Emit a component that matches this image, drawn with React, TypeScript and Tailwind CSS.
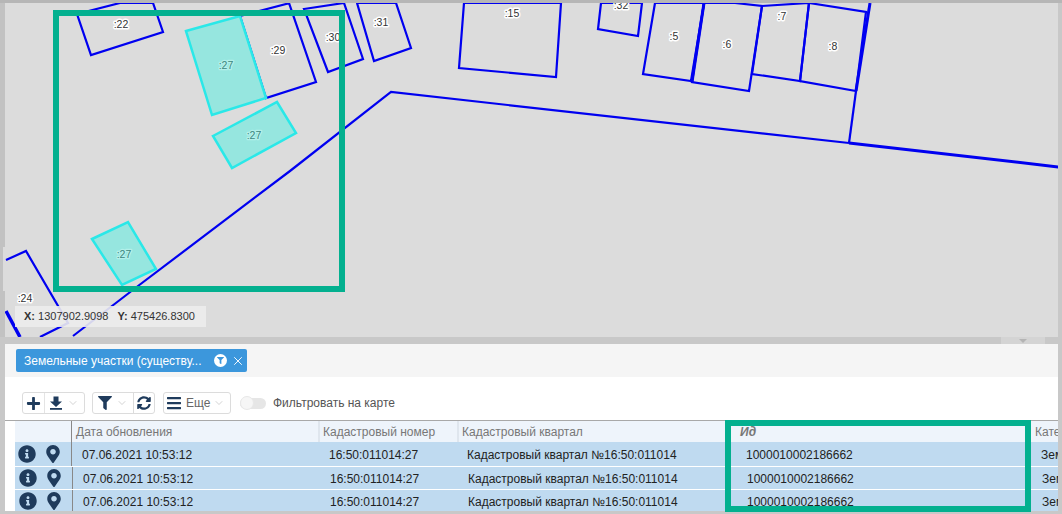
import { FaBars, FaFilter, FaInfoCircle, FaMapMarkerAlt, FaPlus, FaSyncAlt } from "react-icons/fa";
import { ChevronDown, X } from "lucide-react";

const PARCELS = [
  "153,3 163,32 91,55 77,14 120,3",
  "240,16 290,3 289,3 316,82 266,98",
  "304,9 344,3 363,59 328,72",
  "357,3 374,61 411,48 396,3",
  "464,3 459,68 556,77 561,3",
  "601,3 598,29 638,36 642,3",
  "655,3 643,74 691,81 704,3",
  "704,3 692,82 749,91 762,6 735,3",
  "762,6 752,74 800,81 809,3",
  "809,3 866,12 856,91 800,81",
];

const SELECTED = [
  "186,31 240,16 266,98 212,115",
  "213,136 277,102 296,133 232,168",
  "92,239 128,222 156,269 122,285",
];

const LABELS = [
  { t: ":22", x: 121, y: 28 },
  { t: ":29", x: 278, y: 54 },
  { t: ":30", x: 333, y: 41 },
  { t: ":31", x: 381, y: 26 },
  { t: ":15", x: 512, y: 17 },
  { t: ":32", x: 621, y: 9 },
  { t: ":5", x: 674, y: 40 },
  { t: ":6", x: 727, y: 48 },
  { t: ":7", x: 782, y: 20 },
  { t: ":8", x: 833, y: 50 },
  { t: ":24", x: 25, y: 302 },
];

const SELECTED_LABELS = [
  { x: 226, y: 69 },
  { x: 254, y: 139 },
  { x: 124, y: 258 },
];

// the lower two rows sit 1px to the right in the picture
const ROWS = [
  { h: "h-[24px]", shift: "" },
  { h: "h-[22px] mt-px", shift: "ml-px" },
  { h: "h-[21px] mt-px", shift: "ml-px" },
];

function MapCanvas() {
  return (
    <svg className="block h-[334px] w-[1053px] shrink-0" viewBox="5 3 1053 334">
      <rect x="5" y="3" width="1053" height="334" fill="#dcdcdc" />
      <g fill="none" stroke="#0000f0" strokeWidth="2.2" strokeLinejoin="miter">
        {PARCELS.map((p) => (
          <polygon key={p} points={p} />
        ))}
        <polyline points="6,260 26,251 68,323 40,337" />
        <polyline points="73,336 138,286 290,171 391,92 849,143" />
        <polyline points="849,143 1059,167" strokeWidth="3" />
        <polyline points="870,3 856,91" strokeWidth="3" />
        <polyline points="856,91 849,143" />
        <polyline points="704,3 692,82" strokeWidth="3" />
        <polyline points="6,311 20,337" strokeWidth="3.5" />
      </g>
      {SELECTED.map((p) => (
        <polygon key={p} points={p} fill="#96e6df" stroke="#2ae8e8" strokeWidth="2.5" />
      ))}
      {LABELS.map((l) => (
        <text key={l.t} x={l.x} y={l.y} textAnchor="middle" fontSize="10.5" fill="#333" stroke="#fff" strokeWidth="3" paintOrder="stroke" strokeLinejoin="round">
          {l.t}
        </text>
      ))}
      {SELECTED_LABELS.map((l) => (
        <text key={l.x} x={l.x} y={l.y} textAnchor="middle" fontSize="10.5" fill="#3d8780" stroke="#b4f0ea" strokeWidth="2.5" paintOrder="stroke" strokeLinejoin="round">
          :27
        </text>
      ))}
    </svg>
  );
}

function DownloadIcon() {
  return (
    <svg width="14" height="14" viewBox="0 0 14 14" fill="#1f3b5c">
      <path d="M4.5 0.5h5v5H13L7 11 1 5.5h3.5z" />
      <rect x="1" y="12" width="12" height="1.8" />
    </svg>
  );
}

function Caret() {
  return <ChevronDown size={12} strokeWidth={1.2} className="shrink-0 text-[#b5b5b5]" />;
}

export default function App() {
  return (
    <div className="relative flex h-[514px] w-[1062px] flex-col overflow-hidden bg-[#c8c8c8] font-['Liberation_Sans',Arial,sans-serif]">
      <div className="h-[3px] shrink-0 bg-[#b6b6b6]" />
      <div className="flex h-[334px] shrink-0">
        <div className="w-[5px] shrink-0 bg-[#c2c2c2] pt-[244px]">
          <div className="ml-[3px] h-[44px] w-[2px] bg-[#dcdcdc]" />
        </div>
        <MapCanvas />
      </div>

      <div className="flex h-[7px] shrink-0 justify-end pr-[17px]">
        <div className="flex h-[7px] w-[44px] items-start justify-center bg-[#d4d4d4]">
          <div className="mt-[2px] h-0 w-0 border-x-[4px] border-t-[4px] border-x-transparent border-t-[#b4b4b4]" />
        </div>
      </div>

      <div className="ml-[5px] mr-[4px] flex h-[167px] shrink-0 flex-col bg-white">
        <div className="flex h-[33px] shrink-0 items-start bg-[#f5f5f5] pl-[11px] pt-[5px]">
          <div className="flex h-[23px] w-[231px] items-center rounded-[2px] bg-[#3c97dc] pl-[8px] text-[12px] text-white">
            <span className="w-[190px] truncate">Земельные участки (существу...</span>
            <span className="flex h-[13px] w-[13px] items-center justify-center rounded-full bg-white text-[#3c97dc]">
              <FaFilter size={7} />
            </span>
            <X size={14} strokeWidth={1.6} className="ml-[4px] text-white" />
          </div>
        </div>

        <div className="flex h-[43px] shrink-0 items-start pl-[17px] pt-[15px]">
          <div className="flex h-[22px] w-[63px] shrink-0 items-center rounded-[3px] border border-[#dcdcdc]">
            <span className="flex w-[21px] justify-center text-[#1f3b5c]">
              <FaPlus size={15} />
            </span>
            <span className="flex h-full w-[23px] items-center justify-center border-l border-[#e4e4e4]">
              <DownloadIcon />
            </span>
            <Caret />
          </div>
          <div className="ml-[7px] flex h-[22px] w-[63px] shrink-0 items-center rounded-[3px] border border-[#dcdcdc]">
            <span className="flex w-[23px] justify-center text-[#1f3b5c]">
              <FaFilter size={14} />
            </span>
            <Caret />
            <span className="ml-[5px] flex h-full flex-1 items-center justify-center border-l border-[#dcdcdc] text-[#1f3b5c]">
              <FaSyncAlt size={14} />
            </span>
          </div>
          <div className="ml-[8px] flex h-[22px] w-[68px] shrink-0 items-center rounded-[3px] border border-[#dcdcdc] pl-[2px] text-[12px] text-[#666]">
            <FaBars size={16} className="text-[#1f3b5c]" />
            <span className="ml-[4px]">Еще</span>
            <span className="ml-[3px]">
              <Caret />
            </span>
          </div>
          <div className="flex h-[22px] items-center">
            <div className="ml-[9px] flex h-[11px] w-[26px] items-center rounded-full bg-[#e6e6e6]">
              <div className="h-[14px] w-[14px] rounded-full border border-[#e8e8e8] bg-[#f6f6f6]" />
            </div>
            <span className="ml-[7px] whitespace-nowrap text-[12px] text-[#555]">Фильтровать на карте</span>
          </div>
        </div>

        <div className="flex-1 overflow-hidden border-t border-[#a8a8a8] pl-[10px] text-[12px]">
          <div className="flex h-[21px] items-center whitespace-nowrap bg-[#eef4fb] text-[#777]">
            <div className="h-full w-[57px] shrink-0 border-r border-[#888]" />
            <div className="w-[246px] shrink-0 pl-[4px]">Дата обновления</div>
            <div className="flex h-full w-[139px] shrink-0 items-center border-l-2 border-[#dfe6ee] pl-[3px]">Кадастровый номер</div>
            <div className="flex h-full w-[268px] shrink-0 items-center border-l-2 border-[#dfe6ee] pl-[3px]">Кадастровый квартал</div>
            <div className="flex h-full w-[308px] shrink-0 items-center border-l-2 border-[#dfe6ee] pl-[13px] font-bold italic">Ид</div>
            <div className="pl-[2px]">Категория</div>
          </div>
          {ROWS.map((r, i) => (
            <div key={i} className={`flex items-center whitespace-nowrap bg-[#bfdaf0] text-[#222] ${r.h}`}>
              <div className={`flex h-full w-[57px] shrink-0 items-center border-r border-[#888] pl-[3px] text-[#1f3b5c] ${r.shift}`}>
                <FaInfoCircle size={18} className="shrink-0" />
                <FaMapMarkerAlt size={18} className="ml-[8px] shrink-0" />
              </div>
              <div className="w-[246px] shrink-0 pl-[10px] pt-[2px]">07.06.2021 10:53:12</div>
              <div className="w-[139px] shrink-0 pl-[11px] pt-[2px]">16:50:011014:27</div>
              <div className="w-[268px] shrink-0 pl-[10px] pt-[2px]">Кадастровый квартал №16:50:011014</div>
              <div className="w-[308px] shrink-0 pl-[21px] pt-[2px]">1000010002186662</div>
              <div className="pl-[8px] pt-[2px]">Земельные</div>
            </div>
          ))}
        </div>
      </div>

      <div className="pointer-events-none absolute left-[53px] top-[10px] h-[282px] w-[292px] border-[6px] border-[#03b08f]" />
      <div className="pointer-events-none absolute left-[725px] top-[420px] h-[92px] w-[306px] border-[6px] border-[#03b08f]" />
      <div className="absolute left-[15px] top-[306px] flex h-[21px] w-[191px] items-center gap-[9px] whitespace-nowrap bg-[#ececec]/90 pl-[9px] text-[11px] text-[#333]">
        <span>
          <b>X:</b> 1307902.9098
        </span>
        <span>
          <b>Y:</b> 475426.8300
        </span>
      </div>
    </div>
  );
}
